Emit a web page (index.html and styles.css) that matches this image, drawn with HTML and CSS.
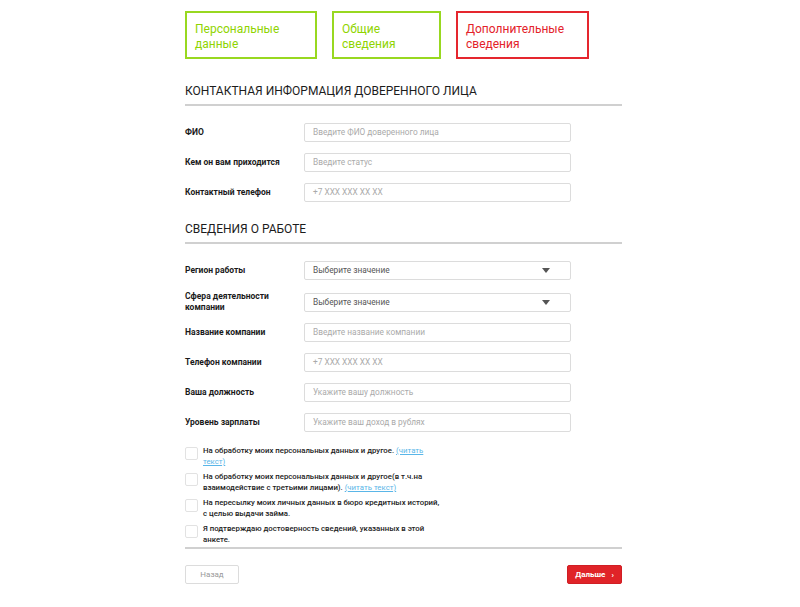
FILE: index.html
```html
<!DOCTYPE html>
<html lang="ru">
<head>
<meta charset="utf-8">
<link rel="stylesheet" href="styles.css">
</head>
<body>
<div class="page">
  <div class="tabs">
    <div class="tab tab-done tab-w1">Персональные<br>данные</div>
    <div class="tab tab-done tab-w2">Общие<br>сведения</div>
    <div class="tab tab-active tab-w3">Дополнительные<br>сведения</div>
  </div>

  <h2 class="section-title">Контактная информация доверенного лица</h2>
  <div class="rows">
    <div class="row"><div class="label">ФИО</div><div class="field placeholder">Введите ФИО доверенного лица</div></div>
    <div class="row"><div class="label">Кем он вам приходится</div><div class="field placeholder">Введите статус</div></div>
    <div class="row"><div class="label">Контактный телефон</div><div class="field placeholder">+7 XXX XXX XX XX</div></div>
  </div>

  <h2 class="section-title second">Сведения о работе</h2>
  <div class="rows">
    <div class="row"><div class="label">Регион работы</div><div class="field select">Выберите значение<span class="arrow"></span></div></div>
    <div class="row row-tall"><div class="label">Сфера деятельности<br>компании</div><div class="field select">Выберите значение<span class="arrow"></span></div></div>
    <div class="row"><div class="label">Название компании</div><div class="field placeholder">Введите название компании</div></div>
    <div class="row"><div class="label">Телефон компании</div><div class="field placeholder">+7 XXX XXX XX XX</div></div>
    <div class="row"><div class="label">Ваша должность</div><div class="field placeholder">Укажите вашу должность</div></div>
    <div class="row"><div class="label">Уровень зарплаты</div><div class="field placeholder">Укажите ваш доход в рублях</div></div>
  </div>

  <div class="checks">
    <div class="check"><span class="box"></span><p>На обработку моих персональных данных и другое. <a href="#">(читать<br>текст)</a></p></div>
    <div class="check"><span class="box"></span><p>На обработку моих персональных данных и другое(в т.ч.на<br>взаимодействие с третьими лицами). <a href="#">(читать текст)</a></p></div>
    <div class="check"><span class="box"></span><p>На пересылку моих личных данных в бюро кредитных историй,<br>с целью выдачи займа.</p></div>
    <div class="check"><span class="box"></span><p>Я подтверждаю достоверность сведений, указанных в этой<br>анкете.</p></div>
  </div>

  <div class="actions">
    <button class="btn btn-back">Назад</button>
    <button class="btn btn-next">Дальше <span class="chev">›</span></button>
  </div>
</div>
</body>
</html>
```

FILE: styles.css
```css
* { box-sizing: border-box; }
html, body { margin: 0; padding: 0; background: #fff; }
body { font-family: Roboto, "Liberation Sans", Arial, sans-serif; color: #222; }

.page {
  width: 437px;
  margin-left: 185px;
  padding-top: 11px;
}

.tabs { display: flex; gap: 15px; height: 48px; }
.tab {
  border: 2px solid;
  padding: 9px 0 0 8px;
  font-size: 12px;
  line-height: 15px;
}
.tab-w1 { width: 132px; }
.tab-w2 { width: 109px; }
.tab-w3 { width: 133px; }
.tab-done { border-color: #98d820; color: #8fd400; }
.tab-active { border-color: #e5262e; color: #e3222a; }

.section-title {
  margin: 0;
  padding: 24px 0 5px;
  font-size: 12px;
  font-weight: 400;
  line-height: 16px;
  text-transform: uppercase;
  color: #1c1c1c;
  border-bottom: 2px solid #d0d0d0;
}
.section-title.second { padding-top: 19px; }

.rows { padding-top: 17px; display: flex; flex-direction: column; gap: 11px; }
.row {
  display: grid;
  grid-template-columns: 119px 267px;
  align-items: center;
  height: 19px;
}
.row-tall { margin-bottom: 2px; }
.label {
  font-family: Roboto, "Liberation Sans", Arial, sans-serif;
  font-size: 8.5px;
  font-weight: 700;
  line-height: 11px;
  color: #1a1a1a;
}
.field {
  height: 19px;
  border: 1px solid #dcdcdc;
  border-radius: 2px;
  padding: 0 8px;
  font-size: 8.3px;
  line-height: 17px;
  color: #aaa;
  position: relative;
}
.select { color: #555; }
.arrow {
  position: absolute;
  right: 20px;
  top: 6px;
  width: 0; height: 0;
  border-left: 4px solid transparent;
  border-right: 4px solid transparent;
  border-top: 5px solid #555;
}

.checks {
  margin-top: 13px;
  padding-bottom: 2px;
  border-bottom: 2px solid #d0d0d0;
  display: flex;
  flex-direction: column;
  gap: 4px;
}
.check { display: flex; align-items: flex-start; gap: 5px; }
.box {
  flex: none;
  width: 13px; height: 13px;
  margin-top: 2px;
  border: 1px solid #e2e2e2;
  border-radius: 2px;
}
.check p {
  margin: 0;
  font-family: Roboto, "Liberation Sans", Arial, sans-serif;
  font-size: 7.8px;
  font-weight: 500;
  line-height: 11px;
  color: #222;
}
.check a { color: #5ab6e8; font-weight: 400; text-decoration: underline; }

.actions {
  display: flex;
  justify-content: space-between;
  padding-top: 16px;
}
.btn {
  height: 19px;
  font-family: Roboto, "Liberation Sans", Arial, sans-serif;
  font-size: 8px;
  border-radius: 2px;
  padding: 0;
  cursor: pointer;
}
.btn-back {
  width: 54px;
  background: #fff;
  border: 1px solid #dcdcdc;
  color: #999;
}
.btn-next {
  width: 55px;
  background: #e02328;
  border: 1px solid #d01e24;
  color: #fff;
  font-weight: 700;
}
.chev { margin-left: 4px; }
```
